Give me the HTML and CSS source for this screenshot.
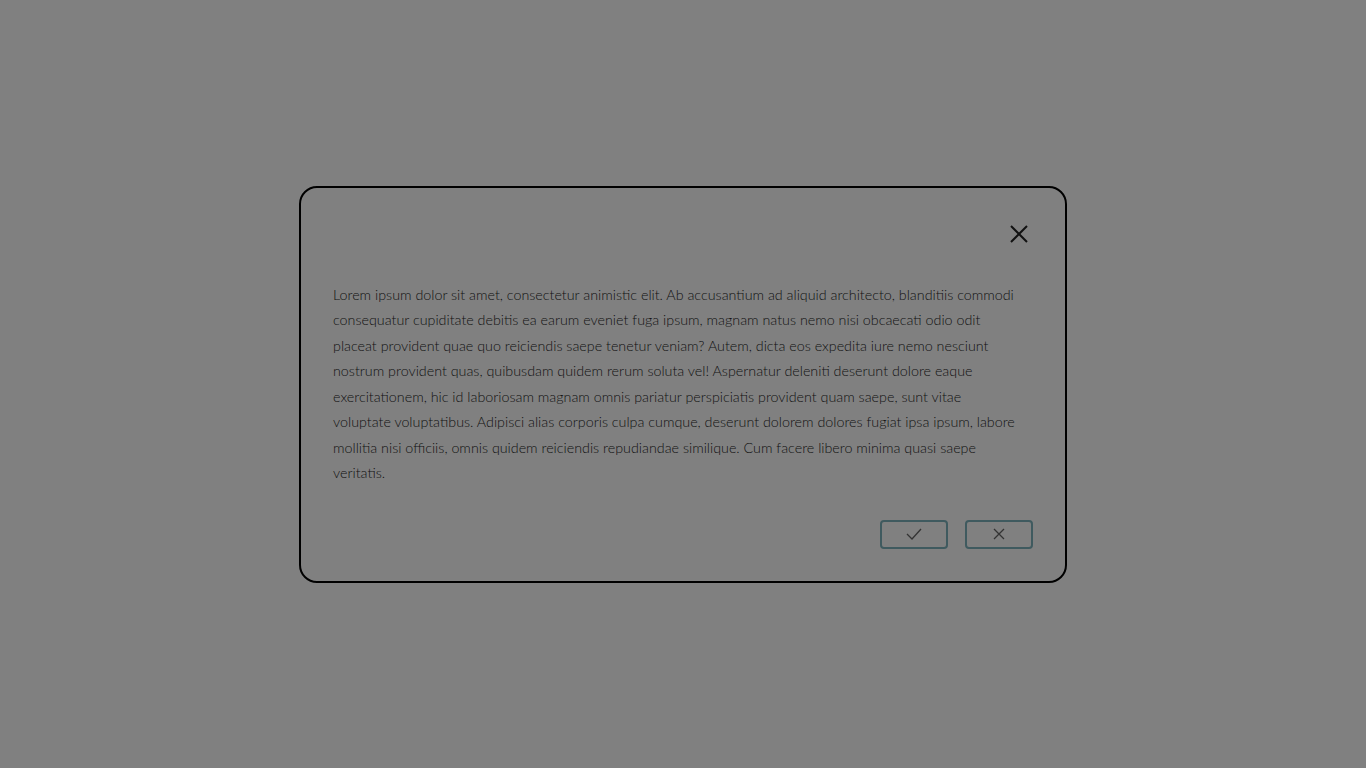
FILE: index.html
```html
<!DOCTYPE html>
<html lang="en">
<head>
<meta charset="utf-8">
<title>Modal</title>
<link rel="stylesheet" href="styles.css">
</head>
<body>
<div class="overlay">
  <div class="modal">
    <div class="modal-header">
      <button class="close" aria-label="Close">
        <svg width="20" height="20" viewBox="0 0 20 20"><path d="M2 2 L18 18 M18 2 L2 18" stroke="#111" stroke-width="2" fill="none"/></svg>
      </button>
    </div>
    <p class="modal-body">Lorem ipsum dolor sit amet, consectetur animistic elit. Ab accusantium ad aliquid architecto, blanditiis commodi<br>
consequatur cupiditate debitis ea earum eveniet fuga ipsum, magnam natus nemo nisi obcaecati odio odit<br>
placeat provident quae quo reiciendis saepe tenetur veniam? Autem, dicta eos expedita iure nemo nesciunt<br>
nostrum provident quas, quibusdam quidem rerum soluta vel! Aspernatur deleniti deserunt dolore eaque<br>
exercitationem, hic id laboriosam magnam omnis pariatur perspiciatis provident quam saepe, sunt vitae<br>
voluptate voluptatibus. Adipisci alias corporis culpa cumque, deserunt dolorem dolores fugiat ipsa ipsum, labore<br>
mollitia nisi officiis, omnis quidem reiciendis repudiandae similique. Cum facere libero minima quasi saepe<br>
veritatis.</p>
    <div class="modal-footer">
      <button class="btn" aria-label="Confirm">
        <svg width="18" height="14" viewBox="0 0 18 14"><path d="M2 7 L7 12 L16 2" stroke="#333" stroke-width="1.3" fill="none"/></svg>
      </button>
      <button class="btn" aria-label="Cancel">
        <svg width="14" height="14" viewBox="0 0 14 14"><path d="M2 2 L12 12 M12 2 L2 12" stroke="#333" stroke-width="1.3" fill="none"/></svg>
      </button>
    </div>
  </div>
</div>
</body>
</html>
```
FILE: styles.css
```css
* { box-sizing: border-box; }
html, body { margin: 0; padding: 0; }
body {
  background: #808080;
  font-family: "Lato", "Liberation Sans", sans-serif;
}
.overlay {
  height: 100vh;
  display: flex;
  align-items: center;
  justify-content: center;
}
.modal {
  width: 768px;
  border: 2px solid #000;
  border-radius: 18px;
  padding: 32px;
  display: flex;
  flex-direction: column;
}
.modal-header {
  display: flex;
  justify-content: flex-end;
  height: 62px;
  padding-top: 4px;
}
.close {
  background: none;
  border: 0;
  padding: 0;
  width: 20px;
  height: 20px;
  margin-right: 4px;
  display: flex;
}
.modal-body {
  margin: 0;
  font-size: 14.3px;
  font-weight: 300;
  line-height: 25.5px;
  color: #111;
  white-space: nowrap;
}
.modal-footer {
  display: flex;
  justify-content: flex-end;
  gap: 17px;
  margin-top: 34px;
}
.btn {
  width: 68px;
  height: 29px;
  border: 2px solid #3f5a5f;
  border-radius: 4px;
  background: transparent;
  display: flex;
  align-items: center;
  justify-content: center;
  padding: 0;
}
```
